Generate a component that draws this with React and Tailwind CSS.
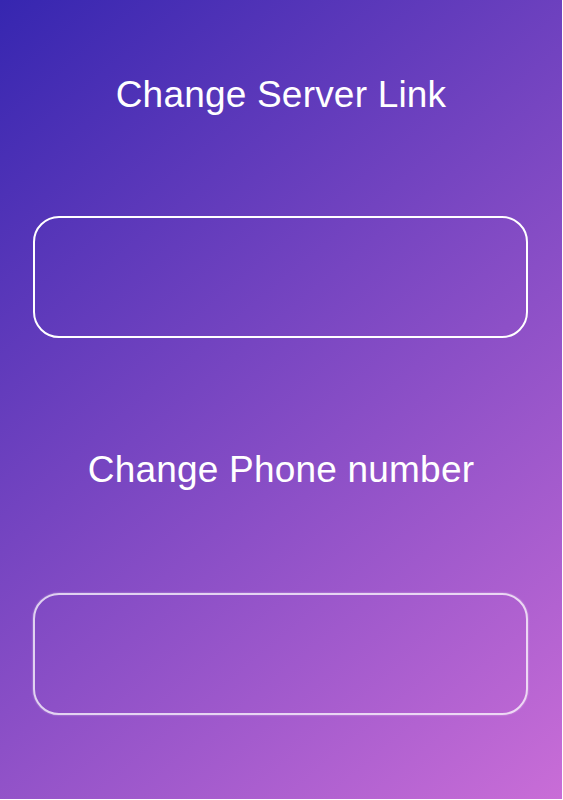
export default function App() {
  return (
    <div className="w-[562px] h-[799px] bg-linear-[140deg] from-[#3626b0] to-[#c96dd7] flex flex-col px-[33px] pt-[72px] font-['Helvetica_Neue','Liberation_Sans',Arial,sans-serif] text-white">
      <h1 className="text-[37px] leading-[45px] text-center font-normal tracking-[0.2px]">Change Server Link</h1>
      <div className="mt-[99px] h-[122px] w-[495px] rounded-[26px] border-2 border-white"></div>
      <h2 className="mt-[109px] text-[37px] leading-[45px] text-center font-normal tracking-[0.2px]">Change Phone number</h2>
      <div className="mt-[101px] h-[122px] w-[495px] rounded-[26px] border-2 border-white/75 shadow-[0_0_2px_rgba(255,255,255,0.5)]"></div>
    </div>
  );
}
